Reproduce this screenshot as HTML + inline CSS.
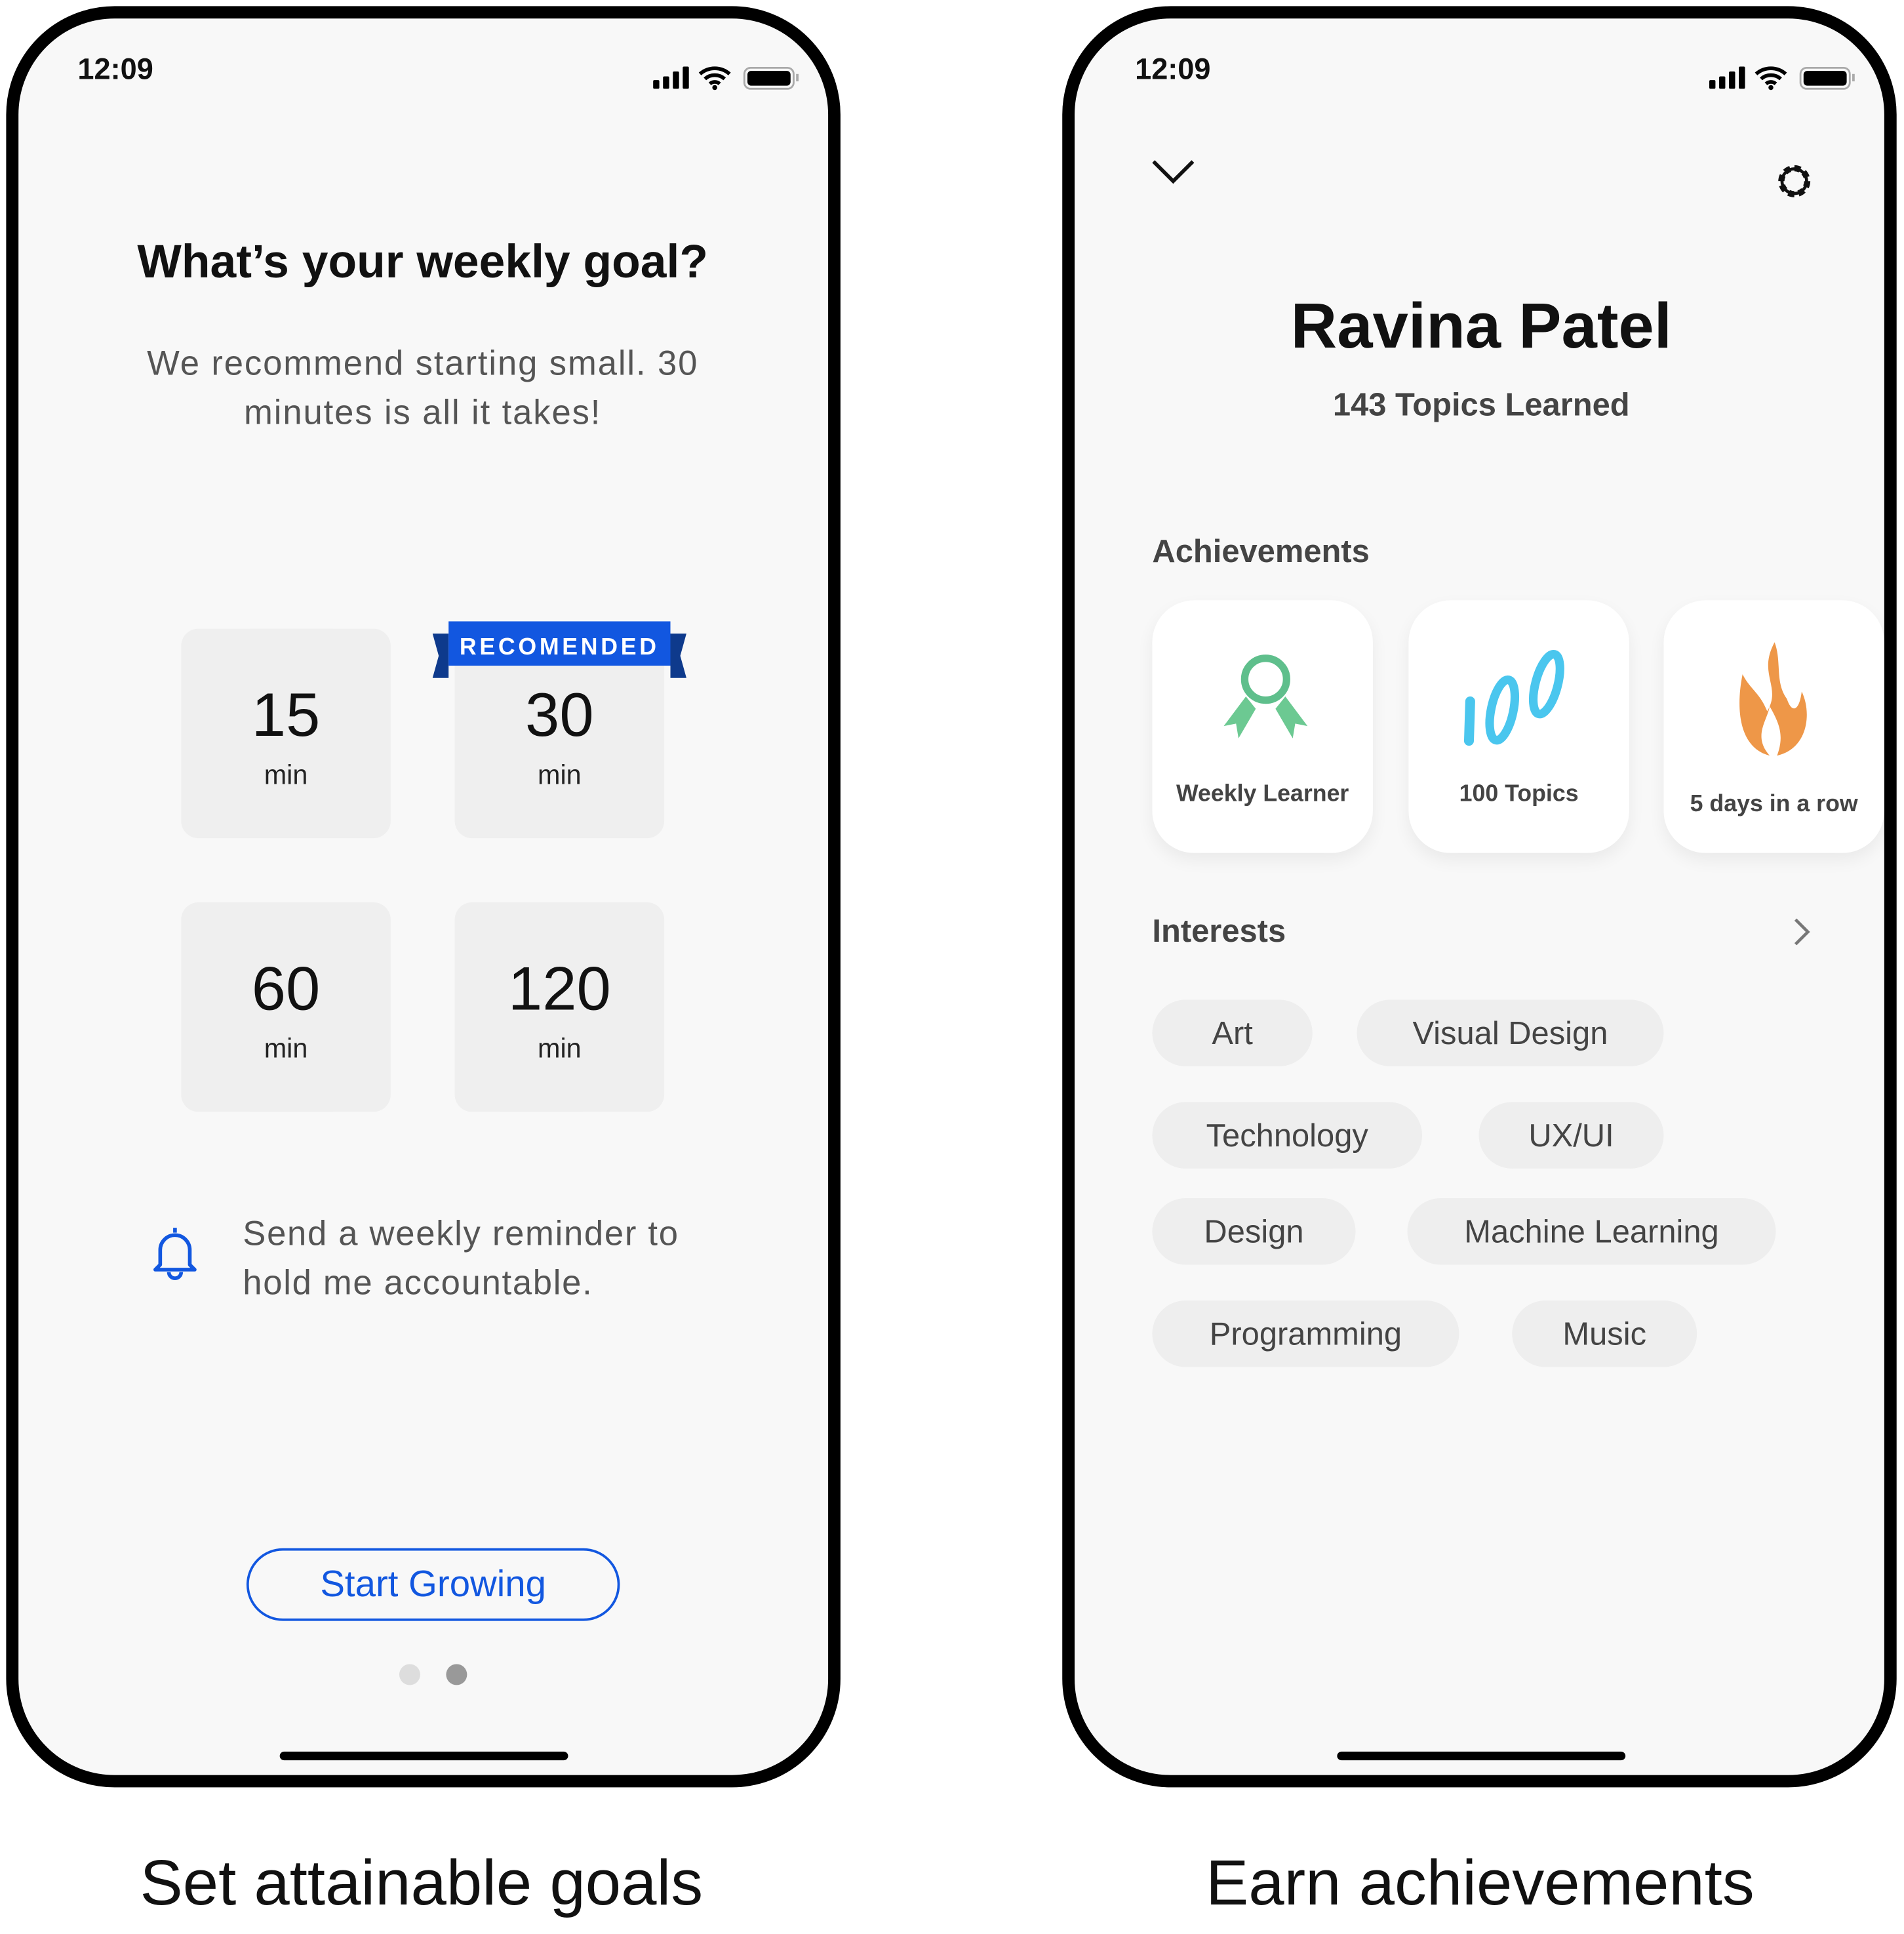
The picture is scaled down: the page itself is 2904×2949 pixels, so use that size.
<!DOCTYPE html>
<html><head><meta charset="utf-8">
<style>
html,body{margin:0;padding:0;background:#fff;width:2904px;height:2949px;overflow:hidden}
#w{position:absolute;left:0;top:0;width:1545px;height:1569px;transform:scale(1.8796);transform-origin:0 0;font-family:"Liberation Sans",sans-serif}
.ph{position:absolute;top:5px;width:657px;height:1425px;border:10px solid #000;border-radius:88px;background:#f8f8f8;overflow:hidden}
.in{position:absolute;left:-5px;top:-5px;width:666px;height:1440px}
.a{position:absolute}
.t{font-size:24px;font-weight:600;color:#111}
.box{position:absolute;width:170px;height:170px;border-radius:14px;background:#efefef;text-align:center}
.box .n{position:absolute;left:0;right:0;top:40px;font-size:50px;color:#111;line-height:60px}
.box .m{position:absolute;left:0;right:0;top:106px;font-size:22px;color:#222}
.card{position:absolute;top:477px;width:179px;height:205px;border-radius:34px;background:#fff;box-shadow:0 6px 14px rgba(0,0,0,.06);text-align:center}
.card .l{position:absolute;left:0;right:0;font-size:19px;font-weight:bold;color:#444}
.chip{position:absolute;height:54px;border-radius:27px;background:#eee;font-size:26px;color:#444;line-height:54px;text-align:center}
.cap{position:absolute;top:1498px;font-size:52px;color:#111;text-align:center;width:680px}
</style></head><body><div id="w">

<!-- LEFT PHONE -->
<div class="ph" style="left:5px"><div class="in">
 <div class="a t" style="left:53px;top:33px">12:09</div>
 <svg class="a" style="left:518px;top:41px" width="125" height="24" viewBox="0 0 125 24">
  <rect x="2" y="14" width="5" height="7" rx="1"/><rect x="10" y="11" width="5" height="10" rx="1"/><rect x="18" y="7" width="5" height="14" rx="1"/><rect x="26" y="3" width="5" height="18" rx="1"/>
  <path d="M40 9a18 18 0 0 1 24 0M44 13a12 12 0 0 1 16 0M48 17a6 6 0 0 1 8 0" stroke="#000" stroke-width="3" fill="none"/><circle cx="52" cy="20" r="2"/>
  <rect x="76" y="4" width="40" height="17" rx="5" fill="none" stroke="#aaa" stroke-width="1.5"/><rect x="78.5" y="6.5" width="35" height="12" rx="3"/><rect x="118" y="9" width="2" height="6" fill="#aaa"/>
 </svg>
 <div class="a" style="left:0;right:0;top:182px;text-align:center;font-size:38px;font-weight:600;color:#111">What’s your weekly goal?</div>
 <div class="a" style="left:0;right:0;top:265px;text-align:center;font-size:28px;line-height:40px;color:#555;letter-spacing:1px">We recommend starting small. 30<br>minutes is all it takes!</div>
 <div class="box" style="left:137px;top:500px"><div class="n">15</div><div class="m">min</div></div>
 <div class="box" style="left:359px;top:500px"><div class="n">30</div><div class="m">min</div></div>
 <div class="box" style="left:137px;top:722px"><div class="n">60</div><div class="m">min</div></div>
 <div class="box" style="left:359px;top:722px"><div class="n">120</div><div class="m">min</div></div>
 <svg class="a" style="left:341px;top:494px" width="206" height="48" viewBox="0 0 206 48">
  <polygon points="0,10 13,10 13,46 0,46 5,28" fill="#0e3a8c"/>
  <polygon points="206,10 193,10 193,46 206,46 201,28" fill="#0e3a8c"/>
  <rect x="13" y="0" width="180" height="36" fill="#1257e0"/>
  <text x="103" y="27" text-anchor="middle" fill="#fff" font-size="19" font-weight="bold" letter-spacing="2.5" font-family="Liberation Sans">RECOMENDED</text>
 </svg>
 <svg class="a" style="left:112px;top:982px" width="40" height="48" viewBox="0 0 40 48" fill="none" stroke="#1257e0" stroke-width="3" stroke-linejoin="round">
  <path d="M20 4v4M8 34V22a12 12 0 0 1 24 0v12l4 4H4z"/><path d="M15 40a5 5 0 0 0 10 0"/>
 </svg>
 <div class="a" style="left:187px;top:971px;font-size:28px;line-height:40px;color:#555;letter-spacing:0.9px">Send a weekly reminder to<br>hold me accountable.</div>
 <div class="a" style="left:190px;top:1246px;width:299px;height:55px;border:2px solid #1257e0;border-radius:30px;text-align:center;line-height:55px;font-size:30px;color:#1257e0">Start Growing</div>
 <div class="a" style="left:314px;top:1340px;width:17px;height:17px;border-radius:50%;background:#ddd"></div>
 <div class="a" style="left:352px;top:1340px;width:17px;height:17px;border-radius:50%;background:#999"></div>
 <div class="a" style="left:217px;top:1411px;width:234px;height:7px;border-radius:4px;background:#000"></div>
</div></div>
<div class="cap" style="left:2px">Set attainable goals</div>

<!-- RIGHT PHONE -->
<div class="ph" style="left:862px"><div class="in" style="left:0;width:660px">
 <div class="a t" style="left:49px;top:33px">12:09</div>
 <svg class="a" style="left:513px;top:41px" width="125" height="24" viewBox="0 0 125 24">
  <rect x="2" y="14" width="5" height="7" rx="1"/><rect x="10" y="11" width="5" height="10" rx="1"/><rect x="18" y="7" width="5" height="14" rx="1"/><rect x="26" y="3" width="5" height="18" rx="1"/>
  <path d="M40 9a18 18 0 0 1 24 0M44 13a12 12 0 0 1 16 0M48 17a6 6 0 0 1 8 0" stroke="#000" stroke-width="3" fill="none"/><circle cx="52" cy="20" r="2"/>
  <rect x="76" y="4" width="40" height="17" rx="5" fill="none" stroke="#aaa" stroke-width="1.5"/><rect x="78.5" y="6.5" width="35" height="12" rx="3"/><rect x="118" y="9" width="2" height="6" fill="#aaa"/>
 </svg>
 <svg class="a" style="left:62px;top:117px" width="36" height="24" viewBox="0 0 36 24"><path d="M2 4l16 16L34 4" stroke="#111" stroke-width="3" fill="none"/></svg>
 <svg class="a" style="left:567px;top:120px" width="34" height="34" viewBox="0 0 34 34"><circle cx="17" cy="17" r="10.5" fill="none" stroke="#111" stroke-width="5" stroke-dasharray="4.8 3.45"/><circle cx="17" cy="17" r="10" fill="none" stroke="#111" stroke-width="2.5"/></svg>
 <div class="a" style="left:0;right:0;top:225px;text-align:center;font-size:52px;font-weight:600;color:#111">Ravina Patel</div>
 <div class="a" style="left:0;right:0;top:303px;text-align:center;font-size:26px;font-weight:bold;color:#444">143 Topics Learned</div>
 <div class="a" style="left:63px;top:422px;font-size:26px;font-weight:bold;color:#444">Achievements</div>
 <div class="card" style="left:63px">
  <svg class="a" style="left:54px;top:40px" width="76" height="80" viewBox="0 0 76 80"><circle cx="38" cy="24" r="17" fill="none" stroke="#5fbf8c" stroke-width="6"/><polygon points="22,38 4,62 14,60 16,72 30,48" fill="#6cc992"/><polygon points="54,38 72,62 62,60 60,72 46,48" fill="#6cc992"/></svg>
  <div class="l" style="top:147px">Weekly Learner</div></div>
 <div class="card" style="left:271px">
  <svg class="a" style="left:44px;top:34px" width="96" height="90" viewBox="0 0 96 90"><path d="M6 48 L5 80" stroke="#4ac6ee" stroke-width="8" stroke-linecap="round"/><ellipse cx="32" cy="55" rx="9" ry="25" transform="rotate(12 32 55)" fill="none" stroke="#4ac6ee" stroke-width="7"/><ellipse cx="68" cy="34" rx="9" ry="25" transform="rotate(15 68 34)" fill="none" stroke="#4ac6ee" stroke-width="7"/></svg>
  <div class="l" style="top:147px">100 Topics</div></div>
 <div class="card" style="left:478px">
  <svg class="a" style="left:56px;top:30px" width="70" height="100" viewBox="0 0 70 100"><path d="M34 4C20 30 40 40 28 60 22 45 14 42 8 30 2 60 6 90 30 96 16 80 28 68 30 56 38 70 42 80 36 96 62 90 64 60 56 44 54 60 48 62 44 50 34 36 40 20 34 4Z" fill="#ee9748"/></svg>
  <div class="l" style="top:155px">5 days in a row</div></div>
 <div class="a" style="left:63px;top:730px;font-size:26px;font-weight:bold;color:#444">Interests</div>
 <svg class="a" style="left:582px;top:733px" width="16" height="26" viewBox="0 0 16 26"><path d="M3 3l10 10L3 23" stroke="#777" stroke-width="2.5" fill="none"/></svg>
 <div class="chip" style="left:63px;top:801px;width:130px">Art</div>
 <div class="chip" style="left:229px;top:801px;width:249px">Visual Design</div>
 <div class="chip" style="left:63px;top:884px;width:219px">Technology</div>
 <div class="chip" style="left:328px;top:884px;width:150px">UX/UI</div>
 <div class="chip" style="left:63px;top:962px;width:165px">Design</div>
 <div class="chip" style="left:270px;top:962px;width:299px">Machine Learning</div>
 <div class="chip" style="left:63px;top:1045px;width:249px">Programming</div>
 <div class="chip" style="left:355px;top:1045px;width:150px">Music</div>
 <div class="a" style="left:213px;top:1411px;width:234px;height:7px;border-radius:4px;background:#000"></div>
</div></div>
<div class="cap" style="left:861px">Earn achievements</div>

</div></body></html>
